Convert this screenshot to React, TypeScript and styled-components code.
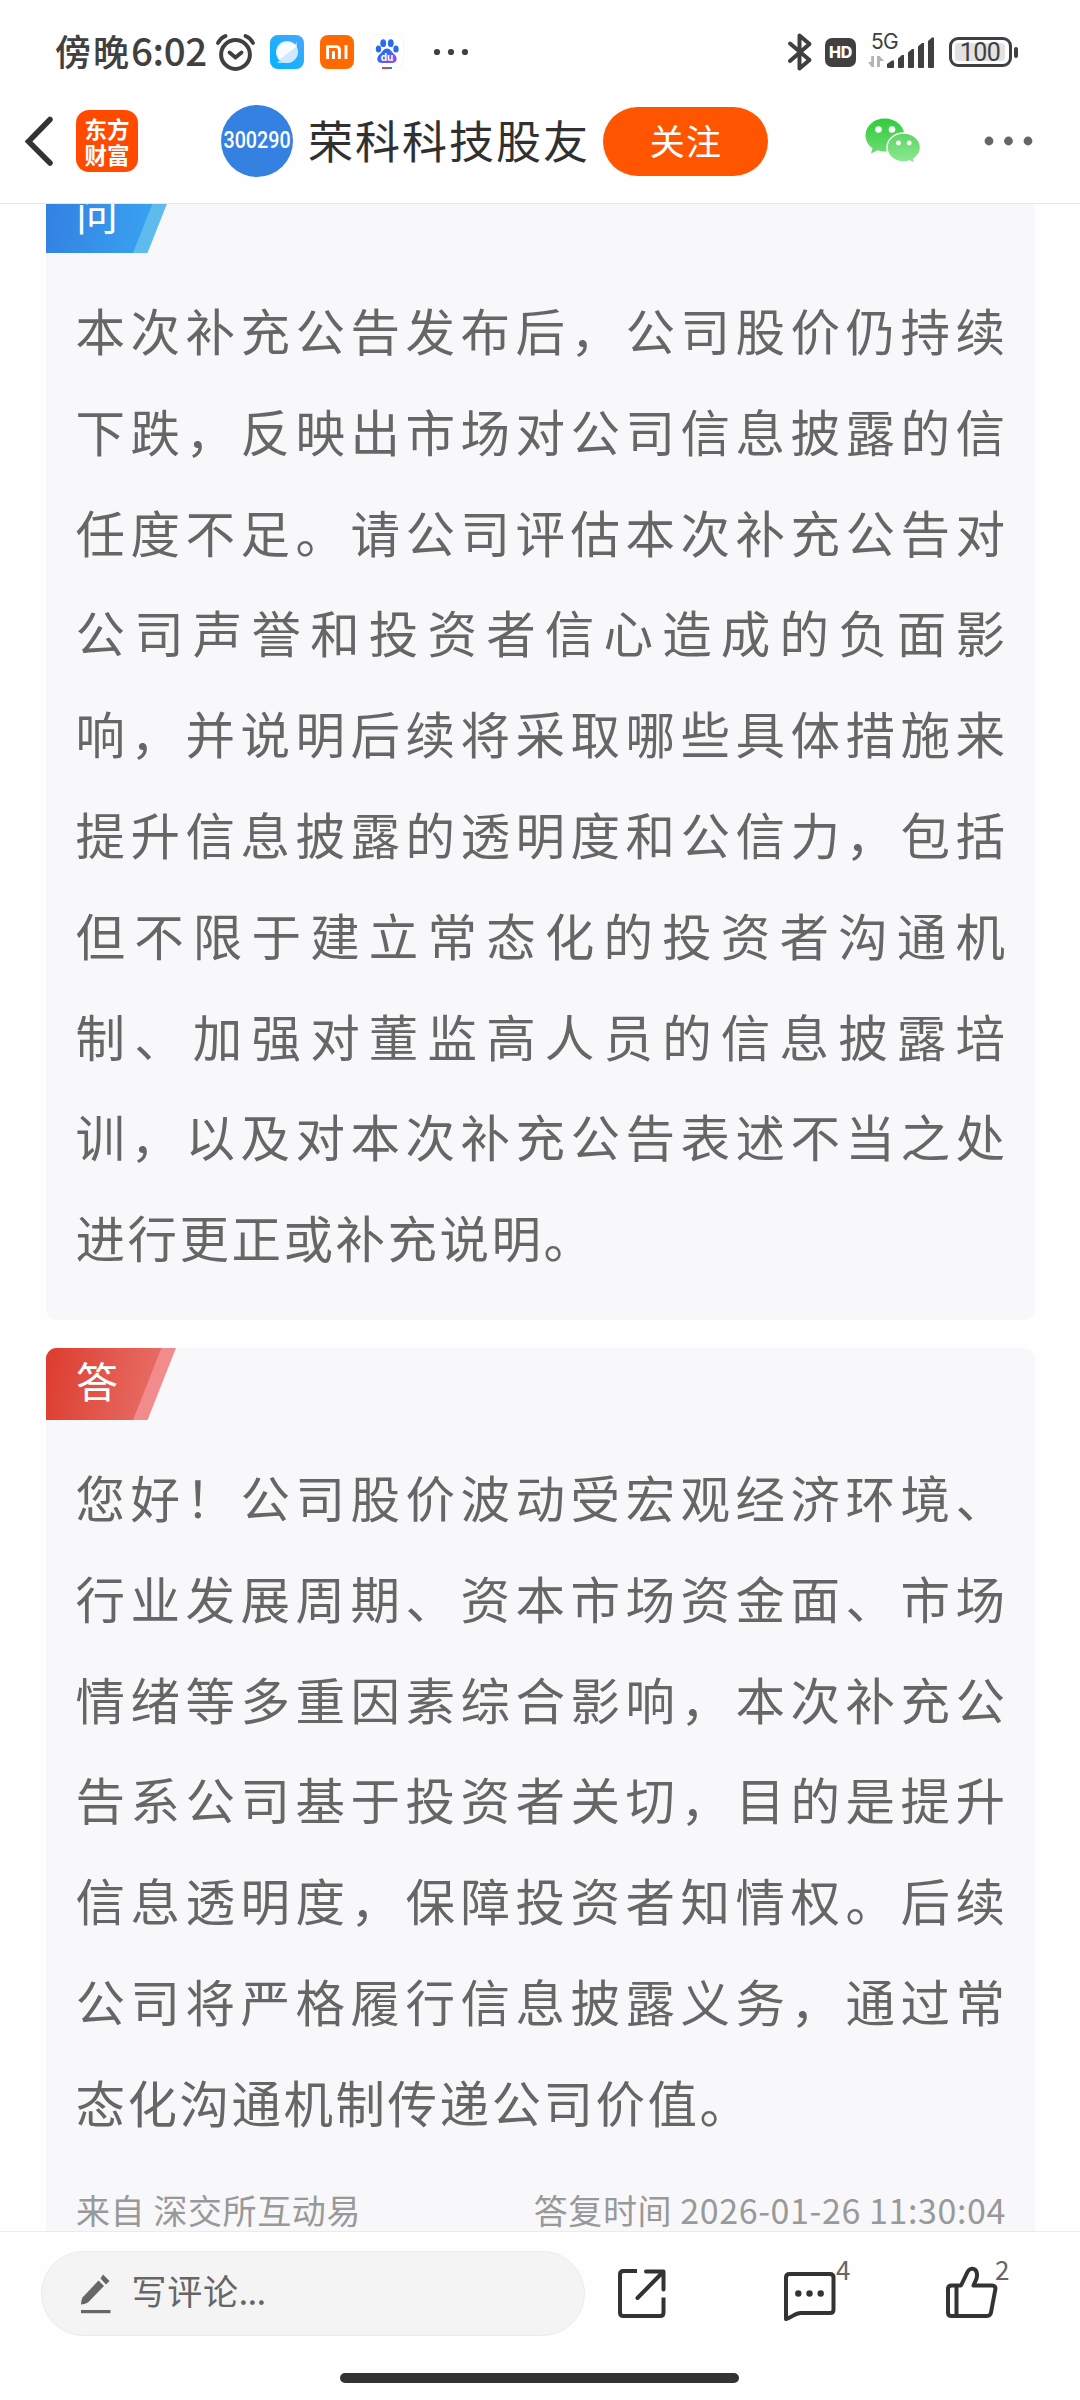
import React from "react";
import styled, { createGlobalStyle } from "styled-components";

const cjk = `"Noto Sans CJK SC", "Noto Sans", sans-serif`;

const Global = createGlobalStyle`
  * { box-sizing: border-box; }
  body { margin: 0; background: #fff; font-family: ${cjk}; }
`;

const Page = styled.div`
  width: 1080px;
  height: 2400px;
  display: flex;
  flex-direction: column;
  background: #fefefe;
  overflow: hidden;
`;

const StatusBar = styled.div`
  height: 88px;
  padding: 16px 62px 0 55px;
  display: flex;
  justify-content: space-between;
  flex: none;
`;

const StatusGroup = styled.div`
  display: flex;
  align-items: center;
  height: 72px;
`;

const Clock = styled.div`
  width: 160px;
  margin-top: -5px;
  font-size: 36px;
  font-weight: 500;
  letter-spacing: 2px;
  line-height: 60px;
  color: #404040;
  white-space: nowrap;
`;

const ClockDigits = styled.span`
  font-size: 38.5px;
  letter-spacing: -0.4px;
`;

const Glyph = styled.svg<{ $gap?: number }>`
  display: block;
  flex: none;
  margin-left: ${(p) => p.$gap ?? 0}px;
`;

const HdBadge = styled.div`
  width: 31px;
  height: 29px;
  margin-left: 12px;
  border-radius: 7px;
  background: #404040;
  color: #fff;
  font: 800 16px/29px Inter, sans-serif;
  letter-spacing: -0.2px;
  text-align: center;
`;

const Signal = styled.div`
  width: 68px;
  height: 40px;
  margin-left: 12px;
  position: relative;
`;

const NetworkType = styled.span`
  position: absolute;
  left: 3px;
  top: 0;
  font: 400 21px/20px Inter, sans-serif;
  letter-spacing: -0.8px;
  color: #404040;
`;

const Battery = styled.div`
  width: 63px;
  height: 30px;
  margin-left: 13px;
  padding: 3px;
  border: 3px solid #404040;
  border-radius: 9px;
`;

const BatteryLevel = styled.div`
  width: 50px;
  height: 18px;
  border-radius: 4px;
  background: #e2e2e2;
  color: #404040;
  font: 400 25px/19px Roboto, sans-serif;
  letter-spacing: -0.6px;
  text-align: center;
`;

const BatteryTip = styled.div`
  width: 4px;
  height: 11px;
  margin-left: 2px;
  border-radius: 2px;
  background: #404040;
`;

const NavBar = styled.div`
  height: 116px;
  padding: 0 0 9px 22px;
  display: flex;
  align-items: center;
  flex: none;
  border-bottom: 1px solid #e8e8ea;
`;

const AppLogo = styled.div`
  width: 62px;
  height: 62px;
  margin-left: 23px;
  padding: 5px 0 0 8.500px;
  border-radius: 13px;
  background: #ff4a00;
  color: #fff;
  font-size: 22.5px;
  font-weight: 700;
  line-height: 26px;
`;

const Avatar = styled.div`
  width: 72px;
  height: 72px;
  margin-left: 83px;
  border-radius: 50%;
  background: #3481e2;
  color: #fff;
  display: flex;
  align-items: center;
  justify-content: center;
`;

const StockCode = styled.span`
  font: 500 23.5px/28px Roboto, sans-serif;
  transform: scaleX(0.84);
  margin-top: -2px;
`;

const Title = styled.div`
  width: 294px;
  margin-left: 16px;
  margin-top: -2px;
  font-size: 45px;
  line-height: 60px;
  letter-spacing: 2px;
  text-indent: -1px;
  color: #303030;
  white-space: nowrap;
`;

const FollowButton = styled.button`
  width: 165px;
  height: 69px;
  padding: 0 0 3px 1px;
  border: 0;
  border-radius: 35px;
  background: #ff5500;
  color: #fff;
  font: 400 35px/60px ${cjk};
  letter-spacing: 1.3px;
`;

const Feed = styled.main`
  flex: 1;
  min-height: 0;
  padding: 0 45px 0 46px;
  display: flex;
  flex-direction: column;
  gap: 28px;
  overflow: hidden;
`;

const Card = styled.section<{ $scrolled?: boolean }>`
  flex: none;
  margin-top: ${(p) => (p.$scrolled ? -23 : 0)}px;
  padding-bottom: 32px;
  border-radius: 11px;
  background: #f8f8fa;
  overflow: hidden;
`;

const Ribbon = styled.div<{ $edge: string }>`
  width: 130px;
  height: 72px;
  background: ${(p) => p.$edge};
  clip-path: polygon(0 0, 100% 0, 101.5px 100%, 0 100%);
`;

const RibbonFace = styled.div<{ $from: string; $to: string }>`
  width: 115.5px;
  height: 72px;
  padding: 0 0 6px 30px;
  background: linear-gradient(100deg, ${(p) => p.$from}, ${(p) => p.$to});
  clip-path: polygon(0 0, 100% 0, 87px 100%, 0 100%);
  color: #fff;
  font-size: 42px;
  line-height: 64px;
`;

const Paragraph = styled.div`
  width: 932px;
  margin: 27px 0 0 29.500px;
  color: #666;
  font-size: 49.5px;
  letter-spacing: 2.5px;
  line-height: 100.8px;
`;

const Line = styled.div`
  white-space: nowrap;
  text-align: justify;
  text-align-last: justify;
  text-justify: inter-character;
  &:last-child { text-align-last: left; }
`;

const Meta = styled.div`
  padding: 27px 29px 0 30px;
  display: flex;
  justify-content: space-between;
  color: #999;
  font-size: 34px;
  letter-spacing: 0.6px;
  line-height: 60px;
`;

const BottomBar = styled.footer`
  height: 169px;
  flex: none;
  border-top: 1px solid #ebebeb;
  display: flex;
  flex-direction: column;
  align-items: center;
`;

const Actions = styled.div`
  width: 1080px;
  height: 104px;
  margin-top: 19px;
  padding-left: 41px;
  display: flex;
  align-items: flex-start;
`;

const CommentInput = styled.div`
  width: 544px;
  height: 85px;
  padding-left: 39px;
  display: flex;
  align-items: center;
  border: 1px solid #ebebeb;
  border-radius: 43px;
  background: #f4f4f4;
`;

const Placeholder = styled.span`
  margin: -8px 0 0 19.500px;
  color: #666;
  font-size: 35px;
  letter-spacing: 0.7px;
  line-height: 60px;
`;

const Ellipsis = styled.span`
  letter-spacing: -0.8px;
`;

const Action = styled.div<{ $gap: number }>`
  width: 70px;
  height: 85px;
  margin-left: ${(p) => p.$gap}px;
  position: relative;
  padding-top: 14px;
`;

const Count = styled.span<{ $left: number }>`
  position: absolute;
  left: ${(p) => p.$left}px;
  top: 3px;
  color: #666;
  font-size: 26px;
  line-height: 30px;
`;

const HomeIndicator = styled.div`
  width: 399px;
  height: 10px;
  border-radius: 5px;
  margin: 18px 2px 0 0;
  background: #333;
`;

const question = [
  "本次补充公告发布后，公司股价仍持续",
  "下跌，反映出市场对公司信息披露的信",
  "任度不足。请公司评估本次补充公告对",
  "公司声誉和投资者信心造成的负面影",
  "响，并说明后续将采取哪些具体措施来",
  "提升信息披露的透明度和公信力，包括",
  "但不限于建立常态化的投资者沟通机",
  "制、加强对董监高人员的信息披露培",
  "训，以及对本次补充公告表述不当之处",
  "进行更正或补充说明。",
];

const answer = [
  "您好！公司股价波动受宏观经济环境、",
  "行业发展周期、资本市场资金面、市场",
  "情绪等多重因素综合影响，本次补充公",
  "告系公司基于投资者关切，目的是提升",
  "信息透明度，保障投资者知情权。后续",
  "公司将严格履行信息披露义务，通过常",
  "态化沟通机制传递公司价值。",
];

const AlarmIcon = () => (
  <Glyph width="40" height="40" viewBox="0 0 40 40" fill="none" stroke="#404040" strokeLinecap="round">
    <circle cx="20.5" cy="22.5" r="14.4" strokeWidth="4" />
    <path d="M14.5 20.5l6 5 6-5" strokeWidth="3.8" strokeLinejoin="round" />
    <path d="M3 11Q5.500 6 10.500 4M38 11Q35.500 6 30.500 4" strokeWidth="3.8" />
  </Glyph>
);

const BrowserIcon = () => (
  <Glyph $gap={15} width="34" height="34" viewBox="0 0 34 34">
    <defs>
      <linearGradient id="sky" x1="1" y1="0" x2="0" y2="1">
        <stop offset="0" stopColor="#4aa6fb" />
        <stop offset="1" stopColor="#00b4ff" />
      </linearGradient>
    </defs>
    <rect width="34" height="34" rx="8" fill="url(#sky)" />
    <path d="M27 7v9A11 11 0 0 1 16 28H7z" fill="#a8dcff" />
    <circle cx="17" cy="17" r="11" fill="#cfe9ff" />
    <path d="M26.500 11.500A11 11 0 1 0 9 25z" fill="#fafdff" />
  </Glyph>
);

const MiIcon = () => (
  <Glyph $gap={16} width="34" height="34" viewBox="0 0 34 34">
    <rect width="34" height="34" rx="8" fill="#ff6900" />
    <path d="M7.600 24V11.600h8.400q3.400 0 3.400 3.400v9M13.500 24v-8M26 10v14" fill="none" stroke="#fff" strokeWidth="2.900" />
  </Glyph>
);

const PawIcon = () => (
  <Glyph $gap={16} width="34" height="36" viewBox="0 0 34 36">
    <rect x=".5" y=".5" width="33" height="33" rx="8" fill="#fff" stroke="#f6f6f6" />
    <defs>
      <linearGradient id="paw" x1="0" y1="0" x2="1" y2="1">
        <stop offset=".3" stopColor="#2a6af0" />
        <stop offset="1" stopColor="#9b4fe0" />
      </linearGradient>
    </defs>
    <g fill="#276bee">
      <ellipse cx="8.500" cy="15" rx="2.700" ry="3.600" />
      <ellipse cx="13.200" cy="9.200" rx="2.900" ry="3.900" />
      <ellipse cx="20.800" cy="9.200" rx="2.900" ry="3.900" />
      <ellipse cx="26" cy="15" rx="2.700" ry="3.600" />
    </g>
    <path d="M17 14.500c3.500 0 4.500 3.500 7 5.500 4.500 4 3 9-2 9H12c-5 0-6.500-5-2-9 2.500-2 3.500-5.500 7-5.500z" fill="url(#paw)" />
    <text x="17" y="26.500" textAnchor="middle" fontFamily="Inter, sans-serif" fontWeight="700" fontSize="10" fill="#fff">du</text>
    <path d="M12 33h5v2h-5z" fill="#d44a4a" />
    <path d="M17 33h5v2h-5z" fill="#3d78cf" />
  </Glyph>
);

const StatusDots = () => (
  <Glyph $gap={29} width="36" height="10" viewBox="0 0 36 10" fill="#404040">
    <circle cx="4" cy="5" r="3.100" />
    <circle cx="18" cy="5" r="3.100" />
    <circle cx="32" cy="5" r="3.100" />
  </Glyph>
);

const BluetoothIcon = () => (
  <Glyph width="26" height="40" viewBox="0 0 26 40" fill="none" stroke="#404040" strokeWidth="4" strokeLinecap="round" strokeLinejoin="round">
    <path d="M3 11.500L22.500 28 12.500 36.500V3.500L22.500 12 3 29" />
  </Glyph>
);

const SignalIcon = () => (
  <Glyph width="68" height="40" viewBox="0 0 68 40">
    <path d="M6 24v11H3.500L0 30h3.200v-6zM9 35V24h2.500L16 29h-4v6z" fill="#b4b4b4" />
    <g fill="#404040">
      <path d="M19 35v-3l5-3.500h2V35q0 1-1 1h-5q-1 0-1-1z" />
      <path d="M30 35V26.500l4-3.500h2v12q0 1-1 1h-4q-1 0-1-1z" />
      <path d="M40 35V20.500l4-3.500h2v18q0 1-1 1h-4q-1 0-1-1z" />
      <path d="M50 35V14.500l4-3.500h2v24q0 1-1 1h-4q-1 0-1-1z" />
      <path d="M60 35V9l4-3.500h2V35q0 1-1 1h-4q-1 0-1-1z" />
    </g>
  </Glyph>
);

const BackIcon = () => (
  <Glyph width="31" height="52" viewBox="0 0 31 52" fill="none" stroke="#333" strokeWidth="5.500" strokeLinecap="round" strokeLinejoin="miter">
    <path d="M28 4.500L6.500 26.500l21.500 21.500" />
  </Glyph>
);

const WeChatIcon = () => (
  <Glyph $gap={97} width="57" height="48" viewBox="0 0 57 48">
    <defs>
      <linearGradient id="leafA" x1="0" y1="0" x2="0" y2="1">
        <stop offset="0" stopColor="#32cb3c" />
        <stop offset="1" stopColor="#6cdc72" />
      </linearGradient>
      <linearGradient id="leafB" x1="0" y1="0" x2="0" y2="1">
        <stop offset="0" stopColor="#5ed565" />
        <stop offset="1" stopColor="#8fe996" />
      </linearGradient>
    </defs>
    <path d="M20 1.500C9 1.500.500 9 .500 18.500c0 5.300 2.800 9.800 7 12.800L6 36.500l6.500-3.200c2.400.8 4.800 1.200 7.500 1.200 11 0 19.500-7.200 19.500-16S31 1.500 20 1.500z" fill="url(#leafA)" />
    <path d="M38.500 16C29.300 16 22 22.300 22 30.500s7.300 14.500 16.500 14.500c2.200 0 4.200-.3 6-1l5.500 2.500-1.300-4.500c3.800-2.700 6.800-6.700 6.800-11.500C55.500 22.300 47.700 16 38.500 16z" fill="url(#leafB)" stroke="#fff" strokeWidth="1.400" />
    <g fill="#fff">
      <circle cx="13.500" cy="12.500" r="3.300" />
      <circle cx="27" cy="12.500" r="3.300" />
      <circle cx="33.500" cy="26" r="2.400" />
      <circle cx="44.200" cy="26" r="2.400" />
    </g>
  </Glyph>
);

const MoreIcon = () => (
  <Glyph $gap={62} width="50" height="12" viewBox="0 0 50 12" fill="#666">
    <circle cx="5" cy="6" r="4.400" />
    <circle cx="24.500" cy="6" r="4.400" />
    <circle cx="44" cy="6" r="4.400" />
  </Glyph>
);

const PencilIcon = () => (
  <Glyph width="31" height="42" viewBox="0 0 31 42" fill="#666">
    <path d="M17.500 7.500l5.500 5.500L7 29.500Q3.500 31.500 0 31.500q0-4 1.500-7z" />
    <path d="M22 1.500l6.500 6.500-3.500 3.500L19.500 5.500z" />
    <rect x="0" y="37" width="29.500" height="3.200" />
  </Glyph>
);

const ShareIcon = () => (
  <Glyph width="56" height="56" viewBox="0 0 56 56" fill="none" stroke="#333" strokeWidth="4" strokeLinejoin="round">
    <path d="M22 6H8.500Q5 6 5 9.500v38Q5 51 8.500 51H45q3.500 0 3.500-3.500V32.500" />
    <path d="M31 6.500h17.500v18M48 7L22.500 33" strokeLinecap="round" />
  </Glyph>
);

const CommentIcon = () => (
  <Glyph width="56" height="56" viewBox="0 0 56 56" fill="none" stroke="#333" strokeWidth="4" strokeLinejoin="round">
    <path d="M7.500 9H48q3.500 0 3.500 3.500v32q0 3.500-3.500 3.500H18.500C13 48 10 52.500 4 54V12.500Q4 9 7.500 9z" />
    <g fill="#333" stroke="none">
      <circle cx="16.300" cy="28.500" r="3.200" />
      <circle cx="27.500" cy="28.500" r="3.200" />
      <circle cx="38.700" cy="28.500" r="3.200" />
    </g>
  </Glyph>
);

const LikeIcon = () => (
  <Glyph width="56" height="56" viewBox="0 0 56 56" fill="none" stroke="#333" strokeWidth="4" strokeLinejoin="round">
    <path d="M7.500 20.500H17L23.500 7C26 1.500 33.500 3 33 11c0 4-2.500 6-3.500 9.500H48q4 0 3.300 4L47 47.500q-.700 3.500-4 3.500H7.500Q4 51 4 47.500V24q0-3.500 3.500-3.500z" />
    <path d="M12.500 20.500V51" />
  </Glyph>
);

const Text = ({ lines }: { lines: string[] }) => (
  <Paragraph>
    {lines.map((line) => (
      <Line key={line}>{line}</Line>
    ))}
  </Paragraph>
);

export default function App() {
  return (
    <Page>
      <Global />
      <StatusBar>
        <StatusGroup>
          <Clock>
            傍晚<ClockDigits>6:02</ClockDigits>
          </Clock>
          <AlarmIcon />
          <BrowserIcon />
          <MiIcon />
          <PawIcon />
          <StatusDots />
        </StatusGroup>
        <StatusGroup>
          <BluetoothIcon />
          <HdBadge>HD</HdBadge>
          <Signal>
            <SignalIcon />
            <NetworkType>5G</NetworkType>
          </Signal>
          <Battery>
            <BatteryLevel>100</BatteryLevel>
          </Battery>
          <BatteryTip />
        </StatusGroup>
      </StatusBar>
      <NavBar>
        <BackIcon />
        <AppLogo>
          东方
          <br />
          财富
        </AppLogo>
        <Avatar>
          <StockCode>300290</StockCode>
        </Avatar>
        <Title>荣科科技股友</Title>
        <FollowButton>关注</FollowButton>
        <WeChatIcon />
        <MoreIcon />
      </NavBar>
      <Feed>
        <Card $scrolled>
          <Ribbon $edge="#5fbaee">
            <RibbonFace $from="#337fe1" $to="#3aa6f3">问</RibbonFace>
          </Ribbon>
          <Text lines={question} />
        </Card>
        <Card>
          <Ribbon $edge="#f28b8b">
            <RibbonFace $from="#dd3c2e" $to="#e8716a">答</RibbonFace>
          </Ribbon>
          <Text lines={answer} />
          <Meta>
            <span>来自 深交所互动易</span>
            <span>答复时间 2026-01-26 11:30:04</span>
          </Meta>
        </Card>
      </Feed>
      <BottomBar>
        <Actions>
          <CommentInput>
            <PencilIcon />
            <Placeholder>
              写评论<Ellipsis>...</Ellipsis>
            </Placeholder>
          </CommentInput>
          <Action $gap={30}>
            <ShareIcon />
          </Action>
          <Action $gap={97}>
            <CommentIcon />
            <Count $left={54}>4</Count>
          </Action>
          <Action $gap={92}>
            <LikeIcon />
            <Count $left={51}>2</Count>
          </Action>
        </Actions>
        <HomeIndicator />
      </BottomBar>
    </Page>
  );
}
